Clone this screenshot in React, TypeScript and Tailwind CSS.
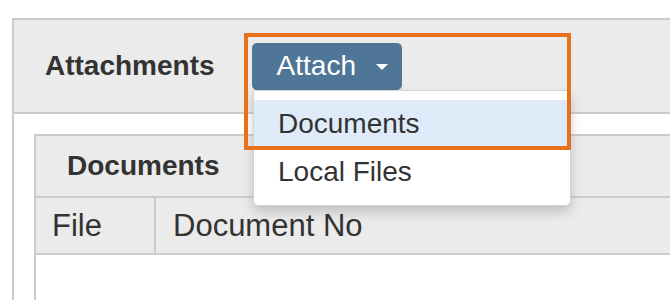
import React from "react";

export default function App() {
  return (
    <div
      className="relative w-[670px] h-[300px] overflow-hidden bg-white text-[#333]"
      style={{ fontFamily: '"Liberation Sans", Arial, sans-serif' }}
    >
      <div className="ml-[12px] mt-[18px] w-[700px] border-2 border-[#cccccc] bg-white">
        {/* Outer heading */}
        <div className="flex items-center h-[94px] bg-[#ebebeb] border-b-2 border-[#cccccc] pl-[31px]">
          <span className="text-[28px] font-bold leading-none">Attachments</span>
          <div className="relative ml-[37px]">
            <button className="flex items-center h-[47px] w-[150px] rounded-[5px] bg-[#4f7696] pl-[25px] text-white text-[28px] leading-none">
              <span>Attach</span>
              <span className="ml-[20px] mt-[2px] block w-0 h-0 border-l-[6px] border-r-[6px] border-t-[6px] border-l-transparent border-r-transparent border-t-white"></span>
            </button>
          </div>
        </div>
        {/* Outer body */}
        <div className="pl-[20px] pt-[20px]">
          <div className="border-2 border-[#cccccc]">
            <div className="flex items-center h-[62px] bg-[#ebebeb] border-b-2 border-[#cccccc] pl-[31px]">
              <span className="text-[28px] font-bold leading-none">Documents</span>
            </div>
            <div className="flex h-[57px] bg-[#ebebeb] border-b-2 border-[#cccccc] text-[31px] leading-none">
              <div className="flex items-center w-[120px] pl-[16px] border-r-2 border-[#cccccc]">File</div>
              <div className="flex items-center pl-[17px]">Document No</div>
            </div>
            <div className="h-[70px] pt-[42px] pl-[47px] text-[26px] text-[#999] leading-none">
              No attachments found in this list
            </div>
          </div>
        </div>
      </div>

      {/* Dropdown menu */}
      <div className="absolute left-[253px] top-[90px] w-[318px] bg-white border border-[#d4d4d4] rounded-b-[5px] py-[9px] shadow-[0_6px_12px_rgba(0,0,0,0.18)]">
        <div className="h-[48px] flex items-center pl-[24px] bg-[#dfebf8] text-[28px] leading-none">Documents</div>
        <div className="h-[48px] flex items-center pl-[24px] text-[28px] leading-none">Local Files</div>
      </div>

      {/* Highlight box */}
      <div className="absolute left-[244px] top-[33px] w-[327px] h-[117px] border-[4px] border-[#e8721c]"></div>
    </div>
  );
}
